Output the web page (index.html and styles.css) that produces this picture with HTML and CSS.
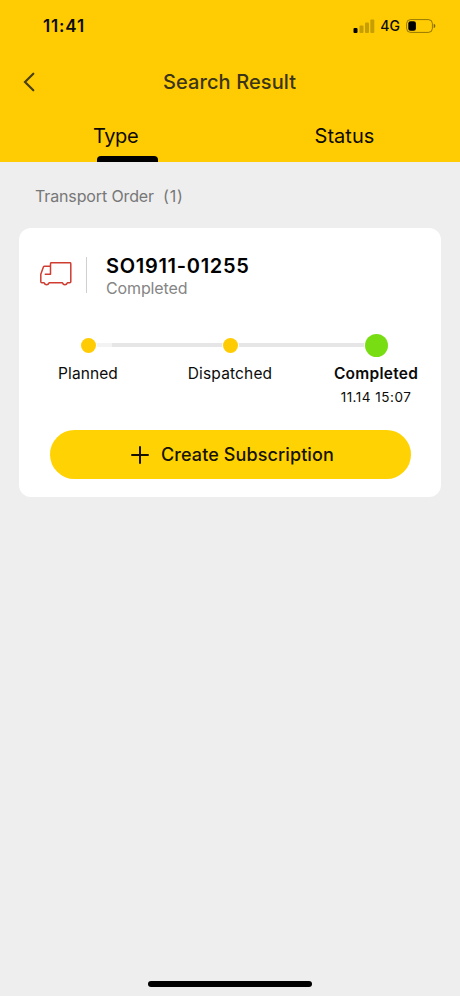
FILE: index.html
```html
<!DOCTYPE html>
<html lang="en">
<head>
<meta charset="utf-8">
<title>Search Result</title>
<link rel="stylesheet" href="styles.css">
</head>
<body>
<div class="screen">
  <header class="header">
    <div class="status-bar">
      <span class="clock">11:41</span>
      <div class="indicators">
        <svg class="signal" width="22" height="16" viewBox="0 0 22 16">
          <rect x="0.5" y="10" width="4" height="5" rx="1"/>
          <g opacity="0.22">
            <rect x="6.5" y="7.5" width="4" height="7.5" rx="1"/>
            <rect x="12" y="4.5" width="4" height="10.5" rx="1"/>
            <rect x="17.3" y="1.5" width="4" height="13.5" rx="1"/>
          </g>
        </svg>
        <span class="network">4G</span>
        <svg class="battery" width="30" height="14" viewBox="0 0 30 14">
          <rect x="0.6" y="0.6" width="25.8" height="12.8" rx="4" fill="none" stroke="#000" stroke-opacity="0.42"/>
          <rect x="2.3" y="2.3" width="7.6" height="9.4" rx="2.2"/>
          <path d="M27.7 4.8q1.7.6 1.7 2.2t-1.7 2.2z" opacity="0.5"/>
        </svg>
      </div>
    </div>
    <div class="nav">
      <svg class="back" width="12" height="20" viewBox="0 0 12 20">
        <path d="M10.3 1.7 2 10l8.3 8.3" fill="none" stroke="#4a4015" stroke-width="2.2" stroke-linecap="round"/>
      </svg>
      <h1 class="title">Search Result</h1>
    </div>
    <nav class="tabs">
      <div class="tab tab-active"><span class="type-label">Type</span></div>
      <div class="tab"><span class="status-label">Status</span></div>
    </nav>
  </header>
  <main class="content">
    <h2 class="group"><span>Transport Order</span><span class="count">(1)</span></h2>
    <section class="card">
      <div class="order">
        <svg class="truck" width="32" height="24" viewBox="0 0 32 24">
          <path d="M10.5 4.5V1.7q0-1 1-1h18.3q1 0 1 1v18.1q0 1-1 1h-2.4q-.7 2-2.5 2t-2.5-2H9.1q-.7 2-2.5 2t-2.5-2H1.8q-1 0-1-1v-7.5L3.4 5q.3-.8 1.2-.8h5.9v8H5.3" fill="none" stroke="#ce3d30" stroke-width="1.5" stroke-linejoin="round" stroke-linecap="round"/>
        </svg>
        <div class="order-info">
          <div class="number">SO1911-01255</div>
          <div class="state">Completed</div>
        </div>
      </div>
      <div class="steps">
        <div class="step"><div class="marker"><i class="dot"></i></div><span class="planned">Planned</span></div>
        <div class="step"><div class="marker"><i class="dot"></i></div><span class="dispatched">Dispatched</span></div>
        <div class="step current"><div class="marker"><i class="dot"></i></div><span class="completed">Completed</span><time>11.14 15:07</time></div>
      </div>
      <button class="subscribe">
        <svg width="18" height="18" viewBox="0 0 18 18"><path d="M9 1v16M1 9h16" stroke="#171300" stroke-width="2" stroke-linecap="round"/></svg>
        <span>Create Subscription</span>
      </button>
    </section>
  </main>
  <footer class="home"><div class="home-bar"></div></footer>
</div>
</body>
</html>
```
FILE: styles.css
```css
* { box-sizing: border-box; }
body { margin: 0; background: #eee; font-family: Inter, "Liberation Sans", sans-serif; color: #0b0b0b; }
.screen { width: 460px; height: 996px; display: flex; flex-direction: column; background: #eee; overflow: hidden; }
.screen svg { display: block; flex: none; }
.header { height: 162px; background: #ffcc04; flex: none; }
.status-bar { height: 52px; display: flex; justify-content: space-between; padding: 0 24px 0 43px; align-items: center; }
.clock { font-size: 17px; font-weight: 600; line-height: 20px; letter-spacing: 0.85px; }
.indicators { display: flex; align-items: center; }
.network { font-size: 14px; font-weight: 500; line-height: 18px; margin: 0 6px 0 5px; }
.nav { height: 60px; display: flex; align-items: center; padding-left: 23px; }
.title { margin: 0 0 0 128px; font-size: 20px; line-height: 24px; font-weight: 550; letter-spacing: 0.1px; color: #3b3415; white-space: nowrap; }
.tabs { display: grid; grid-template-columns: 1fr 1fr; height: 50px; font-size: 20px; line-height: 24px; padding-top: 12px; color: #0d0a00; }
.tab { display: flex; flex-direction: column; align-items: flex-start; justify-content: space-between; }
.type-label { margin-left: 93px; letter-spacing: -0.4px; }
.status-label { margin-left: 84.5px; letter-spacing: 0.05px; }
.tab-active::after { content: ""; width: 61px; height: 6px; margin-left: 97px; background: #000; border-radius: 4px 4px 0 0; }
.content { flex: 1; padding: 24px 19px 0; }
.group { margin: 0 0 22px 16px; font-size: 16px; line-height: 20px; font-weight: 400; color: #777; display: flex; gap: 9px; letter-spacing: -0.13px; }
.count { letter-spacing: 0.9px; }
.card { height: 269px; background: #fff; border-radius: 12px; padding: 26px 31px 0; }
.order { display: flex; margin-left: -10px; height: 46px; }
.truck { margin-top: 8px; }
.order-info { margin-left: 14px; padding-left: 20px; position: relative; }
.order-info::before { content: ""; position: absolute; left: 0; top: 3px; width: 1px; height: 36px; background: #d0d0d0; }
.number { font-size: 20px; line-height: 24px; font-weight: 600; letter-spacing: 0.7px; color: #000; white-space: nowrap; }
.state { font-size: 16px; line-height: 20px; letter-spacing: -0.12px; color: #858585; }
.steps { display: grid; grid-template-columns: 142px 142px 150px; margin: 33px -48px 0 -33px; height: 97px; }
.step { display: flex; flex-direction: column; align-items: center; font-size: 15.5px; line-height: 20px; }
.marker { height: 24px; width: 100%; display: flex; align-items: center; justify-content: center; position: relative; margin-bottom: 7px; }
.marker::before { content: ""; position: absolute; top: 10px; left: 0; right: 0; height: 4px; background: #e6e6e6; }
.step:first-child .marker::before { left: 50%; background: linear-gradient(90deg, #f3f3f3 24px, #e6e6e6 24px); }
.current .marker::before { right: 50%; }
.dot { width: 15px; height: 15px; border-radius: 50%; background: #ffcc04; position: relative; box-shadow: 0 0 0 1px #fff; }
.current .dot { width: 23px; height: 23px; background: #79dd13; }
.planned { letter-spacing: 0.1px; }
.dispatched { letter-spacing: 0.15px; }
.completed { font-weight: 600; letter-spacing: 0.25px; }
.step time { font-size: 13.5px; line-height: 18px; margin-top: 4px; letter-spacing: 0.5px; }
.subscribe { width: 361px; height: 49px; border: 0; border-radius: 25px; background: #ffd203; font: 550 18px/24px Inter, "Liberation Sans", sans-serif; letter-spacing: 0.1px; color: #171300; display: flex; align-items: center; padding: 0 0 0 81px; gap: 12px; white-space: nowrap; }
.home { height: 16px; display: flex; justify-content: center; }
.home-bar { width: 164px; height: 6px; border-radius: 3px; background: #000; margin-top: 1px; }
```
